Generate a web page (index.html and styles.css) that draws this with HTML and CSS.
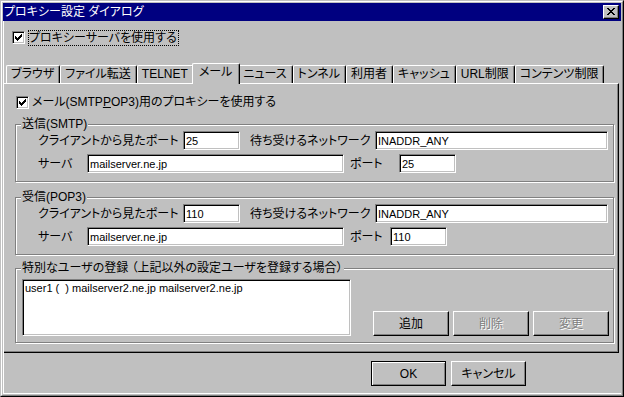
FILE: index.html
```html
<!DOCTYPE html>
<html>
<head>
<meta charset="utf-8">
<title>プロキシー設定 ダイアログ</title>
<link rel="stylesheet" href="styles.css">
</head>
<body>
<div class="window">
<div class="frame">
	<div class="titlebar">
		<span class="title">プロキシー設定 ダイアログ</span>
		<span class="close"><svg width="8" height="7" viewBox="0 0 8 7"><path d="M0 0h2v1H0zM6 0h2v1H6zM1 1h2v1H1zM5 1h2v1H5zM2 2h4v1H2zM3 3h2v1H3zM2 4h4v1H2zM1 5h2v1H1zM5 5h2v1H5zM0 6h2v1H0zM6 6h2v1H6z"/></svg></span>
	</div>
	<div class="client">
		<div class="topcheck">
			<span class="box"><svg width="11" height="11" viewBox="0 0 11 11"><path d="M8 2h1v1H8zM7 3h2v1H7zM2 4h1v1H2zM6 4h3v1H6zM2 5h2v1H2zM5 5h3v1H5zM2 6h5v1H2zM3 7h3v1H3zM4 8h1v1H4z"/></svg></span>
			<span class="focus">プロキシーサーバを使用する</span>
		</div>
		<ul class="tabs">
			<li>ブラウザ</li>
			<li>ファイル転送</li>
			<li>TELNET</li>
			<li class="on">メール</li>
			<li>ニュース</li>
			<li>トンネル</li>
			<li>利用者</li>
			<li>キャッシュ</li>
			<li>URL制限</li>
			<li>コンテンツ制限</li>
		</ul>
		<div class="panel">
			<div class="mailcheck">
				<span class="box"><svg width="11" height="11" viewBox="0 0 11 11"><path d="M8 2h1v1H8zM7 3h2v1H7zM2 4h1v1H2zM6 4h3v1H6zM2 5h2v1H2zM5 5h3v1H5zM2 6h5v1H2zM3 7h3v1H3zM4 8h1v1H4z"/></svg></span>
				<span class="text">メール(SMTP<u>P</u>OP3)用のプロキシーを使用する</span>
			</div>
			<!-- 送信 -->
			<fieldset class="group">
				<legend>送信(SMTP)</legend>
				<div class="row">
					<label class="l-client">クライアントから見たポート</label>
					<input class="field f-port" value="25">
					<label class="l-net">待ち受けるネットワーク</label>
					<input class="field f-net" value="INADDR_ANY">
				</div>
				<div class="row">
					<label class="l-server">サーバ</label>
					<input class="field f-server" value="mailserver.ne.jp">
					<label class="l-port">ポート</label>
					<input class="field f-port" value="25">
				</div>
			</fieldset>
			<!-- 受信 -->
			<fieldset class="group">
				<legend>受信(POP3)</legend>
				<div class="row">
					<label class="l-client">クライアントから見たポート</label>
					<input class="field f-port" value="110">
					<label class="l-net">待ち受けるネットワーク</label>
					<input class="field f-net" value="INADDR_ANY">
				</div>
				<div class="row">
					<label class="l-server">サーバ</label>
					<input class="field f-server" value="mailserver.ne.jp">
					<label class="l-port short">ポート</label>
					<input class="field f-port" value="110">
				</div>
			</fieldset>
			<!-- 特別なユーザ -->
			<fieldset class="group users">
				<legend>特別なユーザの登録 （上記以外の設定ユーザを登録する場合）</legend>
				<div class="userbox">
					<div class="list">user1 (  ) mailserver2.ne.jp mailserver2.ne.jp</div>
					<div class="btns">
						<button class="btn">追加</button>
						<button class="btn" disabled>削除</button>
						<button class="btn" disabled>変更</button>
					</div>
				</div>
			</fieldset>
		</div>
		<div class="footer">
			<button class="btn default">OK</button>
			<button class="btn">キャンセル</button>
		</div>
	</div>
</div>
</div>
</body>
</html>
```

FILE: styles.css
```css
*{margin:0; padding:0; box-sizing:border-box;}
body{background:#c0c0c0; color:#000; font:12px/1 "Liberation Sans","Noto Sans CJK JP",sans-serif; font-feature-settings:"palt";}
ul{list-style:none;}

/* window frame */
.window{width:624px; height:397px; border:1px solid; border-color:#c0c0c0 #000 #000 #c0c0c0;}
.frame{height:100%; border:1px solid; border-color:#fff #808080 #808080 #fff; padding:1px; display:flex; flex-direction:column;}
.titlebar{height:18px; flex:none; background:#000080; color:#fff; display:flex; align-items:center; justify-content:space-between; padding:0 2px 0 1px; line-height:14px;}
.close{width:16px; height:14px; background:#c0c0c0; border:1px solid; border-color:#fff #000 #000 #fff; box-shadow:inset -1px -1px #808080; display:flex; align-items:center; justify-content:center;}
.close svg{display:block; fill:#000; margin:0 1px 1px 0;}
.client{flex:1; border-left:1px solid #fff; border-bottom:1px solid #fff; display:flex; flex-direction:column;}

/* checkbox */
.box{width:13px; height:13px; flex:none; background:#fff; border:1px solid; border-color:#808080 #fff #fff #808080; box-shadow:inset 1px 1px #000, inset -1px -1px #c0c0c0;}
.box svg{display:block; fill:#000;}
.topcheck{display:flex; align-items:flex-start; height:16px; margin:9px 0 0 8px;}
.topcheck .box{margin-top:1px;}
.topcheck .focus{margin-left:3px; height:16px; line-height:14px; border:1px dotted #000; padding:0 1px 0 0;}
.mailcheck{display:flex; align-items:center; height:13px; margin:12px 0 0 12px;}
.mailcheck .text{margin-left:3px; line-height:13px;}

/* tabs */
.tabs{display:flex; align-items:flex-end; height:20px; margin-top:17px; padding-left:2px;}
.tabs li{height:18px; padding:0 5px 0 4px; line-height:16px; border:1px solid; border-bottom:0; border-color:#fff #000 #fff #fff; border-radius:2px 2px 0 0; box-shadow:inset -1px 0 #808080; white-space:nowrap;}
.tabs li.on{height:21px; margin:0 -2px -1px; padding:0 7px 0 6px; position:relative; z-index:1; background:#c0c0c0;}
.panel{margin-right:2px; border-top:1px solid #fff; border-right:1px solid #000; border-bottom:1px solid #000; box-shadow:inset -1px -1px #808080; padding-bottom:9px;}

/* group boxes */
.group{margin:9px 4px 0 11px; padding:0 4px 8px 6px; border:1px solid #808080; box-shadow:inset 1px 1px #fff, 1px 1px #fff; min-width:0;}
.group legend{margin-left:-1px; padding:0 1px; line-height:13px; background:#c0c0c0;}
.group.users{margin-top:7px; padding-bottom:6px;}
.row{display:flex; align-items:center; height:19px; margin-left:16px;}
.row + .row{margin-top:4px;}
.row label{white-space:nowrap;}
.l-client{width:145px;}
.l-net{width:125px; margin-left:10px;}
.l-server{width:49px;}
.l-port{width:49px; margin-left:6px;}
.l-port.short{width:40px;}

.field{height:19px; border:1px solid; border-color:#808080 #fff #fff #808080; box-shadow:inset 1px 1px #000, inset -1px -1px #c0c0c0; background:#fff; padding:0 2px; font:11px "Liberation Sans",sans-serif; color:#000; outline:none;}
.f-port{width:57px;}
.f-net{width:233px;}
.f-server{width:257px;}

.userbox{display:flex; align-items:flex-end; padding-top:4px;}
.list{width:331px; height:57px; border:1px solid; border-color:#808080 #fff #fff #808080; box-shadow:inset 1px 1px #000, inset -1px -1px #c0c0c0; background:#fff; padding:2px 2px; font:11px/13px "Liberation Sans",sans-serif; white-space:pre;}
.btns{display:flex; gap:4px; margin-left:22px;}

/* buttons */
.btn{width:76px; height:25px; background:#c0c0c0; border:1px solid; border-color:#fff #000 #000 #fff; box-shadow:inset -1px -1px #808080; font:inherit; color:#000;}
.btn:disabled{color:#808080; text-shadow:1px 1px #fff;}
.btn.default{border-color:#000; box-shadow:inset 1px 1px #fff, inset -1px -1px #808080;}
.footer{flex:1; display:flex; justify-content:flex-end; align-items:flex-start; gap:5px; padding:8px 95px 0 0;}
.footer .btn{width:75px;}
```
